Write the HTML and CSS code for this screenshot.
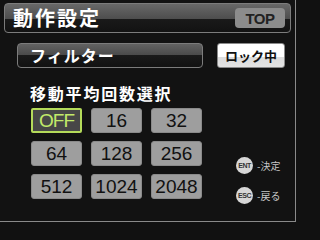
FILE: index.html
```html
<!DOCTYPE html>
<html lang="ja">
<head>
<meta charset="utf-8">
<link rel="stylesheet" href="styles.css">
</head>
<body>
<div class="screen">
  <div class="header">
    <span class="title">動作設定</span>
    <span class="top-btn">TOP</span>
  </div>
  <div class="filter-row">
    <div class="filter-bar">フィルター</div>
    <div class="lock-btn">ロック中</div>
  </div>
  <div class="heading">移動平均回数選択</div>
  <div class="main">
    <div class="grid">
      <div class="cell selected">OFF</div>
      <div class="cell">16</div>
      <div class="cell">32</div>
      <div class="cell">64</div>
      <div class="cell">128</div>
      <div class="cell">256</div>
      <div class="cell">512</div>
      <div class="cell">1024</div>
      <div class="cell">2048</div>
    </div>
    <div class="legend">
      <div class="legend-item"><span class="key">ENT</span><span class="label">-決定</span></div>
      <div class="legend-item"><span class="key">ESC</span><span class="label">-戻る</span></div>
    </div>
  </div>
</div>
</body>
</html>
```
FILE: styles.css
```css
html, body {
  margin: 0;
  padding: 0;
  background: #111;
}
.screen {
  width: 295px;
  height: 221px;
  border-right: 1px solid #8a8a8a;
  border-bottom: 1px solid #8a8a8a;
  background: #121212;
  overflow: hidden;
  font-family: "Noto Sans CJK JP", "Liberation Sans", sans-serif;
}
.header {
  box-sizing: border-box;
  margin: 3px 0 0 4px;
  width: 287px;
  height: 30px;
  border: 1px solid #7c7c7c;
  border-radius: 4px;
  background: linear-gradient(#686868 0%, #4e4e4e 52%, #1a1a1a 52%, #121212 100%);
  display: flex;
  align-items: center;
  justify-content: space-between;
}
.title {
  margin-left: 8px;
  color: #fff;
  font-size: 20px;
  font-weight: bold;
  letter-spacing: 2px;
  line-height: 28px;
}
.top-btn {
  margin-right: 5px;
  width: 50px;
  height: 20px;
  border-radius: 4px;
  background: #8c8c8c;
  color: #222;
  font-family: "Liberation Sans", sans-serif;
  font-weight: bold;
  font-size: 15px;
  letter-spacing: -0.5px;
  display: flex;
  align-items: center;
  justify-content: center;
}
.filter-row {
  display: flex;
  margin: 10px 0 0 17px;
  gap: 14px;
}
.filter-bar {
  box-sizing: border-box;
  width: 186px;
  height: 25px;
  border: 1px solid #7c7c7c;
  border-radius: 4px;
  background: linear-gradient(#626262 0%, #4a4a4a 48%, #1a1a1a 48%, #121212 100%);
  color: #fff;
  font-size: 16px;
  font-weight: bold;
  letter-spacing: 1px;
  line-height: 23px;
  padding-left: 12px;
}
.lock-btn {
  box-sizing: border-box;
  width: 68px;
  height: 25px;
  border: 1px solid #8a8a8a;
  border-radius: 3px;
  background: linear-gradient(#ffffff 0%, #ffffff 55%, #dcdcdc 55%, #e4e4e4 100%);
  color: #111;
  font-size: 13px;
  font-weight: bold;
  line-height: 23px;
  text-align: center;
}
.heading {
  margin: 14px 0 0 30px;
  color: #fff;
  font-size: 16px;
  font-weight: bold;
  letter-spacing: 1.8px;
  line-height: 22px;
}
.main {
  display: flex;
  margin: 4px 0 0 31px;
}
.grid {
  display: grid;
  grid-template-columns: repeat(3, 51px);
  grid-auto-rows: 25px;
  column-gap: 9px;
  row-gap: 8px;
}
.cell {
  box-sizing: border-box;
  border: 1px solid #8a8a8a;
  border-radius: 3px;
  background: #9e9e9e;
  color: #111;
  font-family: "Liberation Sans", sans-serif;
  font-size: 19px;
  display: flex;
  align-items: center;
  justify-content: center;
}
.cell.selected {
  border: 2px solid #b4da5a;
  border-radius: 2px;
  background: #474747;
  color: #c2ea6a;
  letter-spacing: -1px;
}
.legend {
  display: flex;
  flex-direction: column;
  gap: 13px;
  margin: 49px 0 0 34px;
}
.legend-item {
  display: flex;
  align-items: center;
  gap: 4px;
}
.key {
  width: 17px;
  height: 17px;
  border-radius: 50%;
  background: #d6d6d6;
  color: #333;
  font-family: "Liberation Sans", sans-serif;
  font-weight: bold;
  font-size: 7px;
  letter-spacing: -0.5px;
  display: flex;
  align-items: center;
  justify-content: center;
}
.label {
  color: #c8c8c8;
  font-size: 10px;
  line-height: 17px;
}
```
